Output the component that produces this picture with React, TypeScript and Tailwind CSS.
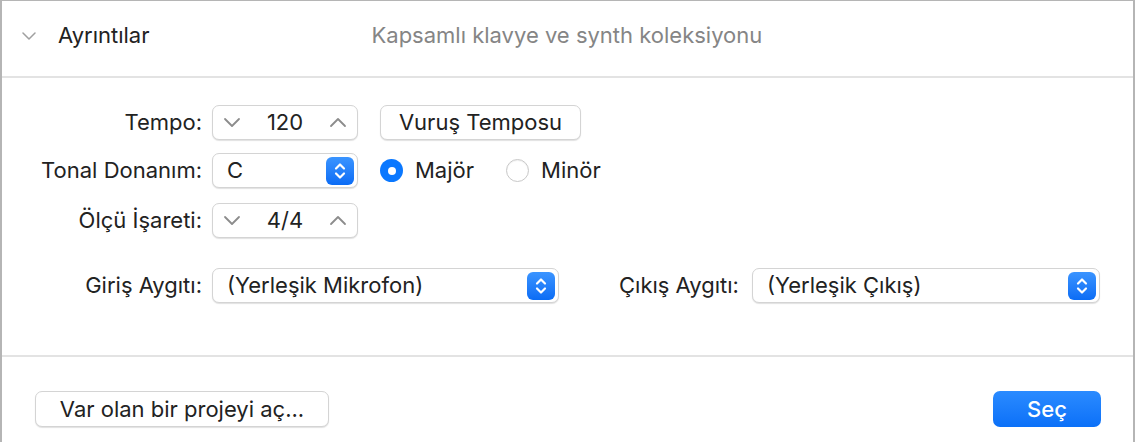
const font = { fontFamily: "Inter, 'Noto Sans', sans-serif" };

function Chevron({ up, className }: { up?: boolean; className?: string }) {
  return (
    <svg width="18" height="11" viewBox="0 0 18 11" fill="none" stroke="currentColor" strokeWidth="1.8" strokeLinecap="round" strokeLinejoin="round" className={className}>
      {up ? <path d="M2 9 L9 2 L16 9" /> : <path d="M2 2 L9 9 L16 2" />}
    </svg>
  );
}

function Updown() {
  return (
    <span className="flex h-[28px] w-[28px] items-center justify-center rounded-[6px] bg-gradient-to-b from-[#3a94ff] to-[#0a6cf5]">
      <svg width="14" height="20" viewBox="0 0 14 20" fill="none" stroke="white" strokeWidth="2.2" strokeLinecap="round" strokeLinejoin="round">
        <path d="M3 7.5 L7 3.5 L11 7.5" />
        <path d="M3 12.5 L7 16.5 L11 12.5" />
      </svg>
    </span>
  );
}

function Stepper({ value }: { value: string }) {
  return (
    <div className="flex h-[35px] w-[146px] items-center justify-between rounded-[7px] border border-[#d4d4d4] bg-white px-[10px] shadow-[0_1px_1px_rgba(0,0,0,0.12)]">
      <Chevron className="text-[#8c8c8c]" />
      <span className="text-[22px] text-[#222]">{value}</span>
      <Chevron up className="text-[#8c8c8c]" />
    </div>
  );
}

function Popup({ value, width }: { value: string; width: string }) {
  return (
    <div className={`flex h-[35px] ${width} items-center justify-between rounded-[7px] border border-[#d4d4d4] bg-white pl-[14px] pr-[3px] shadow-[0_1px_1px_rgba(0,0,0,0.12)]`}>
      <span className="text-[22px] text-[#222]">{value}</span>
      <Updown />
    </div>
  );
}

function Label({ children }: { children: string }) {
  return <span className="w-[210px] pr-[10px] text-right text-[22px] text-[#222]">{children}</span>;
}

export default function App() {
  return (
    <div style={font} className="h-[442px] w-[1136px] overflow-hidden bg-white">
      <div className="mr-[1px] flex h-full flex-col border-l-2 border-r-2 border-t border-[#b5b5b5]">
        {/* header */}
        <div className="flex h-[77px] items-center border-b-2 border-[#e3e3e3] pb-[6px]">
          <svg width="14" height="8" viewBox="0 0 14 8" fill="none" stroke="#a0a0a0" strokeWidth="1.5" strokeLinecap="round" strokeLinejoin="round" className="ml-[20px]">
            <path d="M1 1 L7 7 L13 1" />
          </svg>
          <span className="ml-[22px] text-[22px] text-[#222]">Ayrıntılar</span>
          <span className="ml-[222px] text-[22px] text-[#858585]">Kapsamlı klavye ve synth koleksiyonu</span>
        </div>

        {/* settings */}
        <div className="flex h-[279px] flex-col border-b-2 border-[#e3e3e3] pt-[27px]">
          <div className="flex items-center">
            <Label>Tempo:</Label>
            <Stepper value="120" />
            <button className="ml-[22px] flex h-[35px] w-[201px] items-center justify-center rounded-[7px] border border-[#d4d4d4] bg-white text-[22px] text-[#222] shadow-[0_1px_1px_rgba(0,0,0,0.12)]">
              Vuruş Temposu
            </button>
          </div>
          <div className="mt-[13px] flex items-center">
            <Label>Tonal Donanım:</Label>
            <Popup value="C" width="w-[146px]" />
            <span className="ml-[22px] flex h-[23px] w-[23px] items-center justify-center rounded-full bg-[#0a78ff]">
              <span className="h-[8px] w-[8px] rounded-full bg-white" />
            </span>
            <span className="ml-[12px] text-[22px] text-[#222]">Majör</span>
            <span className="ml-[32px] h-[23px] w-[23px] rounded-full border border-[#c8c8c8] bg-white shadow-[inset_0_1px_1px_rgba(0,0,0,0.06)]" />
            <span className="ml-[12px] text-[22px] text-[#222]">Minör</span>
          </div>
          <div className="mt-[15px] flex items-center">
            <Label>Ölçü İşareti:</Label>
            <Stepper value="4/4" />
          </div>
          <div className="mt-[30px] flex items-center">
            <Label>Giriş Aygıtı:</Label>
            <Popup value="(Yerleşik Mikrofon)" width="w-[347px]" />
            <span className="ml-[60px] text-[22px] text-[#222]">Çıkış Aygıtı:</span>
            <span className="ml-[13px]">
              <Popup value="(Yerleşik Çıkış)" width="w-[348px]" />
            </span>
          </div>
        </div>

        {/* footer */}
        <div className="flex items-center justify-between pl-[33px] pr-[32px] pt-[34px]">
          <button className="flex h-[36px] w-[294px] items-center justify-center rounded-[7px] border border-[#d4d4d4] bg-white text-[22px] text-[#222] shadow-[0_1px_1px_rgba(0,0,0,0.12)]">
            Var olan bir projeyi aç...
          </button>
          <button className="flex h-[36px] w-[108px] items-center justify-center rounded-[7px] bg-gradient-to-b from-[#2a8bff] to-[#0a70f8] text-[22px] font-medium text-white">
            Seç
          </button>
        </div>
      </div>
    </div>
  );
}
